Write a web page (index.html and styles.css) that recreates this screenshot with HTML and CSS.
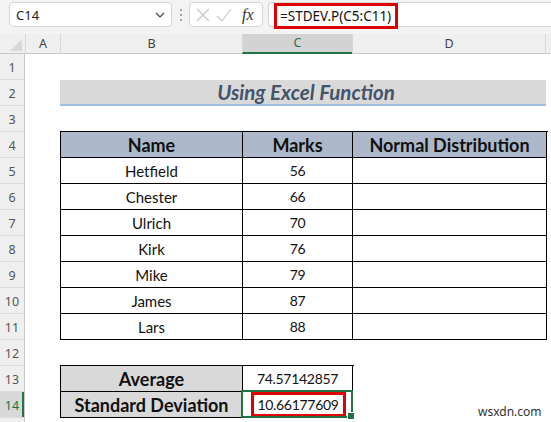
FILE: index.html
```html
<!DOCTYPE html>
<html>
<head>
<meta charset="utf-8">
<link rel="stylesheet" href="styles.css">
</head>
<body>
<div class="app">
  <div class="topbar">
    <div class="namebox">
      <span class="name">C14</span>
      <svg class="chev" width="10" height="6" viewBox="0 0 10 6"><path d="M1 1 L5 5 L9 1" fill="none" stroke="#444" stroke-width="1.2"/></svg>
    </div>
    <svg class="grip" width="4" height="14" viewBox="0 0 4 14"><circle cx="2" cy="2" r="1" fill="#888"/><circle cx="2" cy="7" r="1" fill="#888"/><circle cx="2" cy="12" r="1" fill="#888"/></svg>
    <div class="fxbox">
      <svg width="14" height="14" viewBox="0 0 14 14"><path d="M1 1 L13 13 M13 1 L1 13" stroke="#c4c4c4" stroke-width="1.1"/></svg>
      <svg width="16" height="14" viewBox="0 0 16 14"><path d="M1 8 L6 13 L15 1" fill="none" stroke="#c4c4c4" stroke-width="1.1"/></svg>
      <span class="fx">fx</span>
    </div>
    <div class="formula"><span class="formula-text">=STDEV.P(C5:C11)</span></div>
  </div>

  <div class="colheads">
    <div class="corner"><svg width="12" height="12" viewBox="0 0 12 12"><path d="M12 0 L12 12 L0 12 Z" fill="#d8d8d8"/></svg></div>
    <div class="colh">A</div>
    <div class="colh">B</div>
    <div class="colh sel">C</div>
    <div class="colh">D</div>
    <div class="colh"></div>
  </div>

  <div class="sheet">
    <div class="rowheads">
      <div class="rh">1</div><div class="rh">2</div><div class="rh">3</div><div class="rh">4</div>
      <div class="rh">5</div><div class="rh">6</div><div class="rh">7</div><div class="rh">8</div>
      <div class="rh">9</div><div class="rh">10</div><div class="rh">11</div><div class="rh">12</div>
      <div class="rh">13</div><div class="rh sel">14</div><div class="rh"></div>
    </div>
    <div class="canvas">
      <div class="row"></div>
      <div class="row"><div class="title">Using Excel Function</div></div>
      <div class="row"></div>
      <div class="tbl big">
        <div class="c hd">Name</div><div class="c hd">Marks</div><div class="c hd">Normal Distribution</div>
        <div class="c">Hetfield</div><div class="c num">56</div><div class="c"></div>
        <div class="c">Chester</div><div class="c num">66</div><div class="c"></div>
        <div class="c">Ulrich</div><div class="c num">70</div><div class="c"></div>
        <div class="c">Kirk</div><div class="c num">76</div><div class="c"></div>
        <div class="c">Mike</div><div class="c num">79</div><div class="c"></div>
        <div class="c">James</div><div class="c num">87</div><div class="c"></div>
        <div class="c">Lars</div><div class="c num">88</div><div class="c"></div>
      </div>
      <div class="row"></div>
      <div class="tbl small">
        <div class="c lbl">Average</div><div class="c num">74.57142857</div>
        <div class="c lbl">Standard Deviation</div><div class="c num active"><span class="mark">10.66177609</span></div>
      </div>
    </div>
  </div>
  <div class="watermark">wsxdn.com</div>
</div>
</body>
</html>
```

FILE: styles.css
```css
html, body {
  margin: 0;
  padding: 0;
  background: #fff;
}
.app {
  position: relative;
  width: 551px;
  height: 422px;
  overflow: hidden;
  font-family: Lato, "Noto Sans", sans-serif;
}
.topbar {
  height: 34px;
  box-sizing: border-box;
  padding-top: 2px;
  background: #f3f3f3;
  display: flex;
  align-items: flex-start;
}
.namebox {
  margin-left: 9px;
  width: 163px;
  height: 25px;
  box-sizing: border-box;
  background: #fff;
  border: 1px solid #d6d6d6;
  border-radius: 4px;
  display: flex;
  align-items: center;
  justify-content: space-between;
  padding: 0 6px 0 6px;
  font-family: "Noto Sans", sans-serif;
  font-size: 13px;
  color: #222;
}
.grip {
  margin: 6px 6px 0 7px;
}
.fxbox {
  width: 74px;
  height: 25px;
  box-sizing: border-box;
  background: #fff;
  border: 1px solid #d6d6d6;
  border-radius: 4px;
  display: flex;
  align-items: center;
  padding-left: 6px;
  gap: 6px;
}
.fx {
  font-family: "Liberation Serif", serif;
  font-style: italic;
  font-size: 16px;
  color: #333;
  margin-left: 4px;
}
.formula {
  margin-left: 5px;
  flex: 1;
  height: 25px;
  box-sizing: border-box;
  background: #fff;
  border: 1px solid #d6d6d6;
  border-right: none;
  border-radius: 4px 0 0 4px;
  padding-left: 5px;
}
.formula-text {
  display: inline-block;
  height: 26px;
  box-sizing: border-box;
  border: 3px solid #e00000;
  padding: 0 4px 0 3px;
  font-family: "Noto Sans", sans-serif;
  font-size: 13.5px;
  line-height: 20px;
  color: #111;
  background: #fff;
}
.colheads {
  height: 19px;
  display: grid;
  grid-template-columns: 25px 35px 182px 110px 193px 1fr;
  background: #efefef;
  border-bottom: 1px solid #c8c8c8;
}
.corner {
  display: flex;
  align-items: flex-end;
  justify-content: flex-end;
  padding: 0 3px 3px 0;
}
.colh {
  border-left: 1px solid #d8d8d8;
  text-align: center;
  font-family: "Noto Sans", sans-serif;
  font-size: 12.5px;
  line-height: 19px;
  color: #444;
}
.colh.sel {
  background: #d3d3d3;
  color: #217346;
  border-bottom: 2px solid #217346;
  line-height: 18px;
}
.sheet {
  display: grid;
  grid-template-columns: 25px 1fr;
}
.rowheads {
  background: #efefef;
  border-right: 1px solid #c8c8c8;
}
.rh {
  height: 26px;
  box-sizing: border-box;
  border-bottom: 1px solid #dcdcdc;
  text-align: center;
  font-family: "Noto Sans", sans-serif;
  font-size: 12.5px;
  line-height: 27px;
  color: #555;
}
.rh.sel {
  background: #d8d8d8;
  color: #217346;
  box-shadow: inset -2px 0 0 #217346;
}
.canvas {
  padding-left: 35px;
}
.row {
  height: 26px;
}
.title {
  width: 486px;
  height: 26px;
  box-sizing: border-box;
  background: #d9d9d9;
  border-bottom: 2px solid #9fc0e0;
  text-align: center;
  font-weight: 700;
  font-style: italic;
  font-size: 20.5px;
  line-height: 25px;
  color: #44546a;
  padding-left: 6px;
}
.tbl {
  display: grid;
  margin-top: -1px;
  border-top: 1px solid #000;
  border-left: 1px solid #000;
}
.tbl.big {
  width: 487px;
  grid-template-columns: 182px 110px 194px;
}
.tbl.small {
  width: 293px;
  grid-template-columns: 182px 110px;
}
.c {
  height: 26px;
  box-sizing: border-box;
  border-right: 1px solid #000;
  border-bottom: 1px solid #000;
  text-align: center;
  font-size: 15px;
  line-height: 26px;
  color: #111;
}
.c.num {
  font-size: 14px;
  letter-spacing: -0.3px;
}
.c.hd {
  background: #adb9ca;
  font-weight: 700;
  font-size: 18px;
}
.c.lbl {
  background: #d9d9d9;
  font-weight: 700;
  font-size: 18px;
}
.c.active {
  position: relative;
  display: flex;
  justify-content: center;
  align-items: center;
}
.c.active::after {
  content: "";
  position: absolute;
  left: -2px;
  top: -2px;
  right: -1px;
  bottom: -1px;
  border: 2px solid #217346;
}
.c.active::before {
  content: "";
  position: absolute;
  right: -3px;
  bottom: -3px;
  width: 6px;
  height: 6px;
  background: #217346;
  border: 1px solid #fff;
  z-index: 2;
}
.mark {
  display: block;
  width: 95px;
  height: 25px;
  box-sizing: border-box;
  border: 3px solid #e00000;
  line-height: 19px;
  margin-left: 1px;
}
.watermark {
  position: absolute;
  left: 478px;
  top: 403px;
  font-family: "Noto Sans", sans-serif;
  font-size: 12px;
  color: #333;
}
```
